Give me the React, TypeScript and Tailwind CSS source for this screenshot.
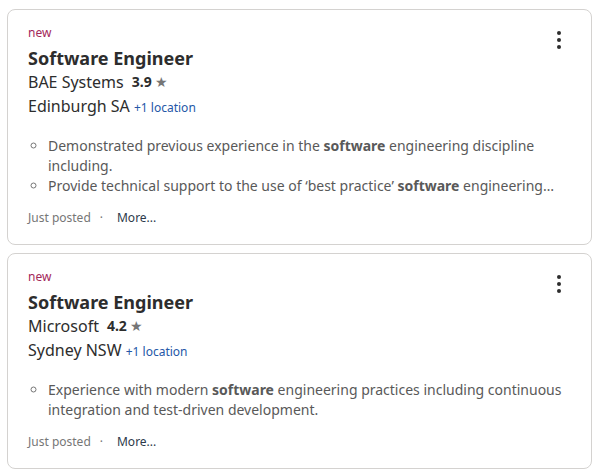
import React from 'react';

type Job = {
  company: string;
  rating: string;
  location: string;
  bullets: React.ReactNode[];
};

const jobs: Job[] = [
  {
    company: 'BAE Systems',
    rating: '3.9',
    location: 'Edinburgh SA',
    bullets: [
      <>
        Demonstrated previous experience in the <b className="font-bold">software</b> engineering discipline including.
      </>,
      <>
        Provide technical support to the use of ‘best practice’ <b className="font-bold">software</b> engineering…
      </>,
    ],
  },
  {
    company: 'Microsoft',
    rating: '4.2',
    location: 'Sydney NSW',
    bullets: [
      <>
        Experience with modern <b className="font-bold">software</b> engineering practices including continuous integration and test-driven development.
      </>,
    ],
  },
];

const Kebab = () => (
  <button className="absolute right-[24px] top-[18px] flex h-[24px] w-[16px] flex-col items-center justify-center gap-[3px]">
    <span className="h-[4px] w-[4px] rounded-full bg-[#2d2d2d]" />
    <span className="h-[4px] w-[4px] rounded-full bg-[#2d2d2d]" />
    <span className="h-[4px] w-[4px] rounded-full bg-[#2d2d2d]" />
  </button>
);

const JobCard = ({ job }: { job: Job }) => (
  <div className="relative rounded-[8px] border border-[#d4d2d0] bg-white px-[20px] pt-[15px] pb-[18px]">
    <Kebab />
    <div className="text-[12px] leading-[16px] text-[#a3285a]">new</div>
    <h2 className="mt-[5px] text-[18px] font-bold leading-[24px] text-[#2d2d2d]">Software Engineer</h2>
    <div className="flex items-center text-[16px] leading-[24px] text-[#2d2d2d]">
      <span>{job.company}</span>
      <span className="ml-[8px] text-[14px] font-bold">{job.rating}</span>
      <span className="ml-[3px] text-[14px] leading-[16px] text-[#767676]">★</span>
    </div>
    <div className="text-[16px] leading-[24px] text-[#2d2d2d]">
      {job.location} <span className="text-[12px] text-[#2557a7]">+1 location</span>
    </div>
    <ul className="mt-[16px] list-[circle] pl-[20px] text-[14px] leading-[20px] text-[#595959] marker:text-[#767676]">
      {job.bullets.map((b, i) => (
        <li key={i}>{b}</li>
      ))}
    </ul>
    <div className="mt-[14px] flex items-center text-[12px] leading-[16px]">
      <span className="text-[#767676]">Just posted</span>
      <span className="ml-[9px] mr-[14px] text-[#767676]">·</span>
      <span className="text-[#2d3a4a]">More...</span>
    </div>
  </div>
);

export default function App() {
  return (
    <div className="min-h-screen bg-white px-[7px] pt-[9px]" style={{ fontFamily: '"Noto Sans", sans-serif' }}>
      <div className="flex flex-col gap-[8px]">
        {jobs.map((j, i) => (
          <JobCard key={i} job={j} />
        ))}
      </div>
    </div>
  );
}
